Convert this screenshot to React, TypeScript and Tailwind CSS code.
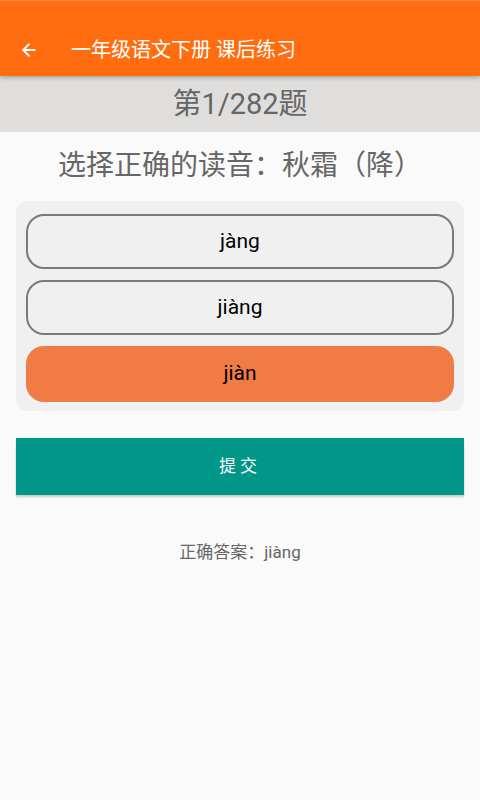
import { ArrowLeft } from 'lucide-react';

const options = [
	{ label: 'jàng', selected: false },
	{ label: 'jiàng', selected: false },
	{ label: 'jiàn', selected: true },
];

export default function App() {
	return (
		<div
			className="flex min-h-[800px] w-[480px] flex-col bg-[#fafafa]"
			style={{ fontFamily: 'Roboto, "Noto Sans CJK SC", sans-serif' }}
		>
			{/* Toolbar */}
			<header className="relative z-10 flex h-[76px] items-center border-t border-[#ff8a3d] bg-[#ff6d10] pt-[22px] shadow-[0_2px_4px_rgba(0,0,0,0.25)]">
				<button className="flex w-[56px] justify-center pl-[1px]" aria-label="Back">
					<ArrowLeft className="h-[20px] w-[20px] text-white" strokeWidth={2.2} />
				</button>
				<h1 className="ml-[15px] text-[20px] leading-none text-white">一年级语文下册 课后练习</h1>
			</header>

			{/* Progress */}
			<div className="flex h-[56px] items-center justify-center bg-[#dfdedc]">
				<span className="text-[29px] leading-none text-[#666]">第1/282题</span>
			</div>

			{/* Question */}
			<p className="mt-[16px] text-center text-[28px] leading-[36px] text-[#666]">选择正确的读音：秋霜（降）</p>

			{/* Options */}
			<div className="mx-[16px] mt-[17px] flex flex-col gap-[11px] rounded-[12px] bg-[#f0f0f0] px-[10px] pb-[9px] pt-[13px]">
				{options.map((o) => (
					<button
						key={o.label}
						className={
							o.selected
								? 'flex h-[56px] items-center justify-center rounded-[18px] bg-[#f07b45] text-[21px] text-black'
								: 'flex h-[55px] items-center justify-center rounded-[18px] border-2 border-[#7a7a7a] bg-[#f0f0f0] text-[21px] text-black'
						}
					>
						{o.label}
					</button>
				))}
			</div>

			{/* Submit */}
			<button className="mx-[16px] mt-[27px] h-[57px] bg-[#009688] text-[17px] tracking-[4px] text-white shadow-[0_2px_2px_rgba(0,0,0,0.2)]">
				提交
			</button>

			<p className="mt-[45px] text-center text-[17px] text-[#666]">正确答案：jiàng</p>
		</div>
	);
}
